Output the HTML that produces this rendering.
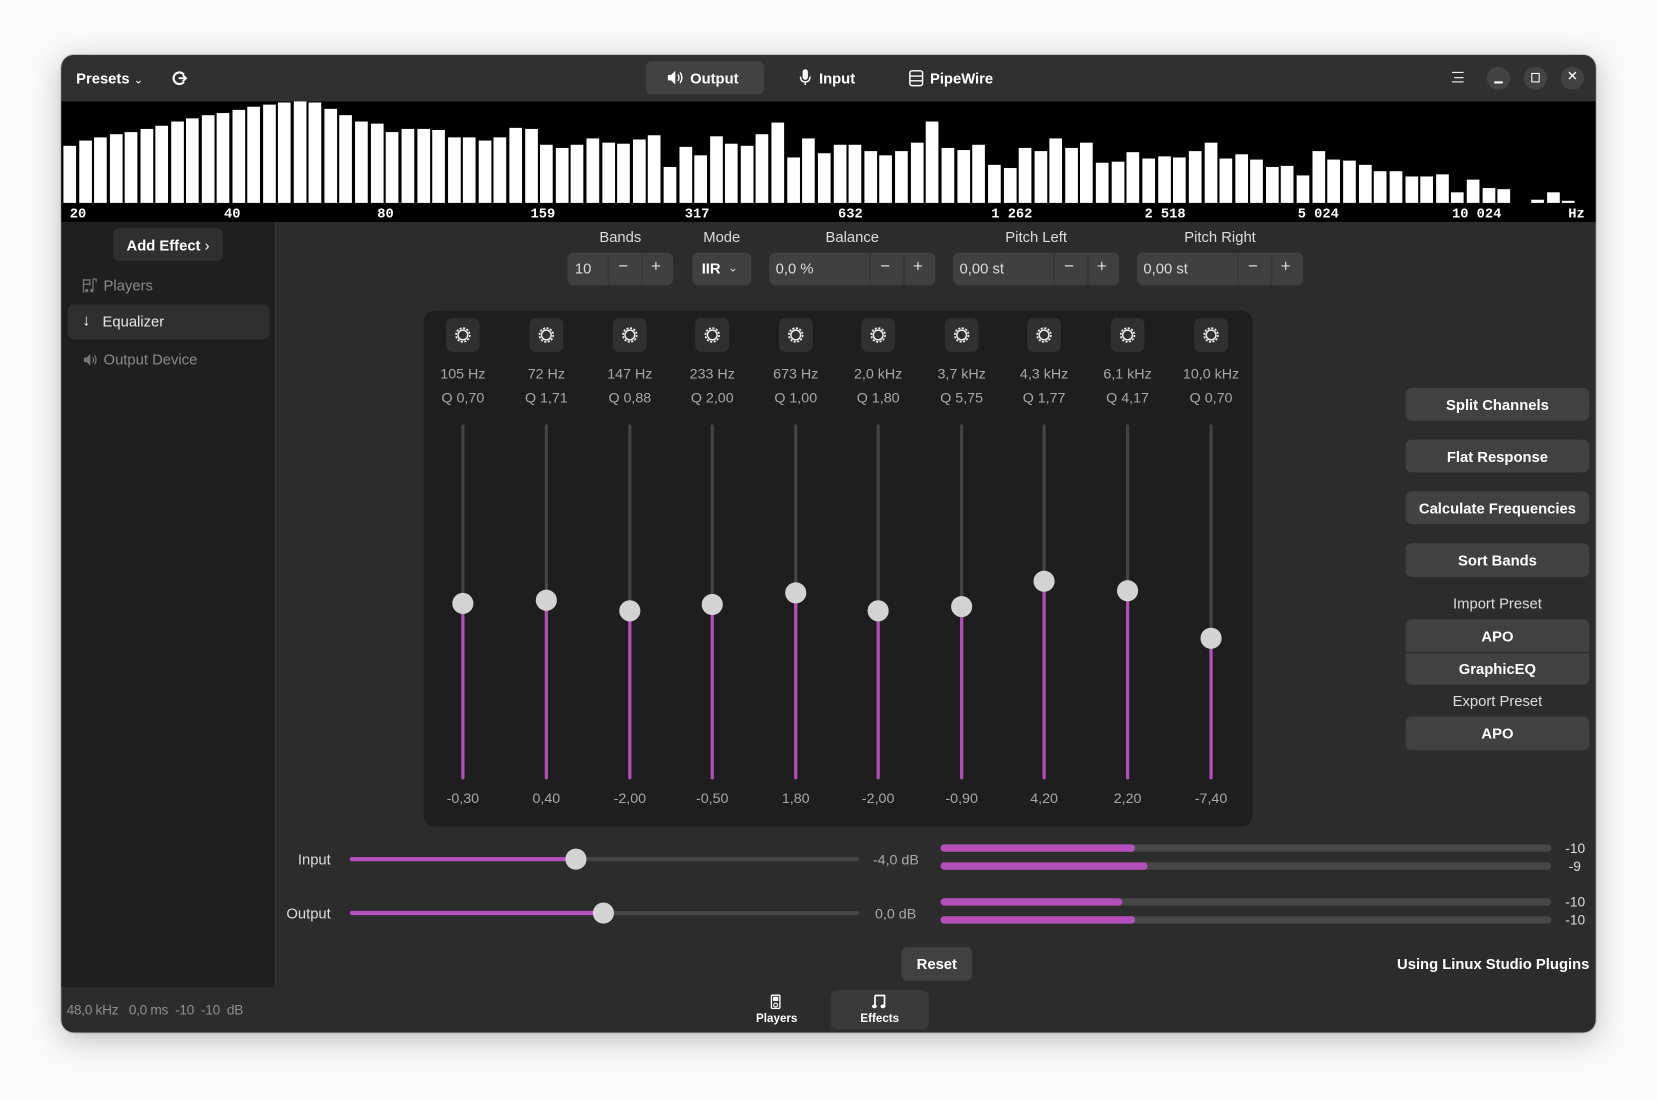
<!DOCTYPE html>
<html><head><meta charset="utf-8"><style>
*{box-sizing:border-box;margin:0;padding:0}
html,body{width:1657px;height:1100px;overflow:hidden;background:#fafafa;font-family:"Liberation Sans",sans-serif}
#s{position:absolute;left:0;top:0;width:1568px;height:1041px;transform:scale(1.05676);transform-origin:0 0}
.a{position:absolute}
.win{left:58px;top:52px;width:1452px;height:925px;background:#2c2c2c;border-radius:12px;overflow:hidden;box-shadow:0 6px 28px rgba(0,0,0,.25),0 0 0 1px rgba(0,0,0,.15)}
.t{color:#fff;font-size:14px;font-weight:bold}
.g{color:#bdbdbd;font-size:13.5px}
.btn{background:#414141;border-radius:6px;color:#fff;font-weight:bold;font-size:14px;display:flex;align-items:center;justify-content:center}
.lbl{font-size:14px;color:#ddd;text-align:center}
.spin{background:#404040;border-radius:6px;height:31px;top:239px;color:#ddd;font-size:14px}
.spin span{position:absolute;top:7px}
.sep{position:absolute;top:0;width:1px;height:31px;background:#353535}
.knob{width:20px;height:20px;border-radius:50%;background:#d3d3d3}
.mt{height:7px;background:#474747;border-radius:4px;left:890px;width:578px}
.mf{height:7px;background:#b64fbc;border-radius:4px;left:890px}
.mv{font-size:13px;color:#ddd;left:1474px;width:26px;text-align:right}
.cb{width:22px;height:22px;border-radius:50%;background:#434343;top:63px}
</style></head><body><div id="s">
<div class="a win"></div>
<div class="a" style="left:58px;top:52px;width:1452px;height:44px;background:#303030;border-radius:12px 12px 0 0"></div>
<div class="a t" style="left:72px;top:66px">Presets <span style="font-weight:normal;font-size:11px">&#8964;</span></div>
<svg class="a" style="left:162px;top:66px" width="16" height="16" viewBox="0 0 16 16"><path d="M12 4.5A5.5 5.5 0 1 0 12 11.5" fill="none" stroke="#fff" stroke-width="2"/><path d="M7 8h7M11 5l3 3-3 3" fill="none" stroke="#fff" stroke-width="1.8"/></svg>
<div class="a" style="left:611px;top:58px;width:112px;height:31px;background:#424242;border-radius:6px"></div>
<svg class="a" style="left:631px;top:66px" width="16" height="15" viewBox="0 0 16 15"><path d="M1 5h3l4-4v13l-4-4H1z" fill="#fff"/><path d="M10.5 4.5q2 3 0 6M12.5 2.5q3.5 5 0 10" fill="none" stroke="#fff" stroke-width="1.3"/></svg>
<div class="a t" style="left:653px;top:66px">Output</div>
<svg class="a" style="left:756px;top:65px" width="12" height="17" viewBox="0 0 12 17"><rect x="3.5" y="0.5" width="5" height="10" rx="2.5" fill="#fff"/><path d="M1.5 7.5q0 5 4.5 5t4.5-5M6 12.5v3" fill="none" stroke="#fff" stroke-width="1.3"/></svg>
<div class="a t" style="left:775px;top:66px">Input</div>
<svg class="a" style="left:860px;top:66px" width="14" height="16" viewBox="0 0 14 16"><rect x="1" y="1" width="12" height="14" rx="2" fill="none" stroke="#fff" stroke-width="1.4"/><path d="M1 6h12M1 10.5h12" stroke="#fff" stroke-width="1.3"/></svg>
<div class="a t" style="left:880px;top:66px">PipeWire</div>
<div class="a" style="left:1374px;top:68px;width:11px;height:10px;border-top:1.5px solid #fff;border-bottom:1.5px solid #fff"></div>
<div class="a" style="left:1376px;top:72.5px;width:9px;height:1.5px;background:#fff"></div>
<div class="a cb" style="left:1407px"></div><div class="a" style="left:1414px;top:77px;width:8px;height:1.5px;background:#fff"></div>
<div class="a cb" style="left:1442px"></div><div class="a" style="left:1449px;top:69px;width:8px;height:9px;border:1.5px solid #fff"></div>
<div class="a cb" style="left:1477px"></div><div class="a" style="left:1477px;top:64px;width:22px;text-align:center;color:#fff;font-size:13px">&#x2715;</div>
<div class="a" style="left:58px;top:96px;width:1452px;height:114px;background:#000"></div>
<svg class="a" style="left:0;top:0" width="1568" height="215">
<g fill="#fff">
<rect x="60" y="138" width="12" height="54"/><rect x="75" y="133" width="12" height="59"/><rect x="89" y="130" width="12" height="62"/><rect x="104" y="127" width="12" height="65"/><rect x="118" y="125" width="12" height="67"/><rect x="133" y="122" width="12" height="70"/><rect x="147" y="119" width="12" height="73"/><rect x="162" y="115" width="12" height="77"/><rect x="176" y="112" width="12" height="80"/><rect x="191" y="109" width="12" height="83"/><rect x="205" y="107" width="12" height="85"/><rect x="220" y="104" width="12" height="88"/><rect x="234" y="101" width="12" height="91"/><rect x="249" y="99" width="12" height="93"/><rect x="263" y="97" width="12" height="95"/><rect x="278" y="96" width="12" height="96"/><rect x="292" y="97" width="12" height="95"/><rect x="307" y="103" width="12" height="89"/><rect x="321" y="109" width="12" height="83"/><rect x="336" y="115" width="12" height="77"/><rect x="351" y="117" width="12" height="75"/><rect x="365" y="125" width="12" height="67"/><rect x="380" y="122" width="12" height="70"/><rect x="395" y="122" width="12" height="70"/><rect x="409" y="123" width="12" height="69"/><rect x="424" y="130" width="12" height="62"/><rect x="438" y="130" width="12" height="62"/><rect x="453" y="133" width="12" height="59"/><rect x="467" y="130" width="12" height="62"/><rect x="482" y="121" width="12" height="71"/><rect x="497" y="122" width="12" height="70"/><rect x="511" y="137" width="12" height="55"/><rect x="526" y="140" width="12" height="52"/><rect x="540" y="137" width="12" height="55"/><rect x="555" y="131" width="12" height="61"/><rect x="570" y="135" width="12" height="57"/><rect x="584" y="136" width="12" height="56"/><rect x="599" y="132" width="12" height="60"/><rect x="613" y="128" width="12" height="64"/><rect x="628" y="158" width="12" height="34"/><rect x="643" y="139" width="12" height="53"/><rect x="657" y="147" width="12" height="45"/><rect x="672" y="129" width="12" height="63"/><rect x="686" y="136" width="12" height="56"/><rect x="701" y="138" width="12" height="54"/><rect x="715" y="127" width="12" height="65"/><rect x="730" y="116" width="12" height="76"/><rect x="745" y="149" width="12" height="43"/><rect x="759" y="131" width="12" height="61"/><rect x="774" y="145" width="12" height="47"/><rect x="789" y="137" width="12" height="55"/><rect x="803" y="137" width="12" height="55"/><rect x="818" y="143" width="12" height="49"/><rect x="832" y="147" width="12" height="45"/><rect x="847" y="143" width="12" height="49"/><rect x="862" y="135" width="12" height="57"/><rect x="876" y="115" width="12" height="77"/><rect x="891" y="140" width="12" height="52"/><rect x="906" y="142" width="12" height="50"/><rect x="920" y="137" width="12" height="55"/><rect x="935" y="156" width="12" height="36"/><rect x="950" y="159" width="12" height="33"/><rect x="964" y="140" width="12" height="52"/><rect x="979" y="143" width="12" height="49"/><rect x="993" y="131" width="12" height="61"/><rect x="1008" y="140" width="12" height="52"/><rect x="1022" y="135" width="12" height="57"/><rect x="1037" y="154" width="12" height="38"/><rect x="1052" y="153" width="12" height="39"/><rect x="1066" y="144" width="12" height="48"/><rect x="1081" y="150" width="12" height="42"/><rect x="1096" y="148" width="12" height="44"/><rect x="1110" y="149" width="12" height="43"/><rect x="1125" y="143" width="12" height="49"/><rect x="1140" y="135" width="12" height="57"/><rect x="1154" y="150" width="12" height="42"/><rect x="1169" y="146" width="12" height="46"/><rect x="1183" y="151" width="12" height="41"/><rect x="1198" y="158" width="12" height="34"/><rect x="1212" y="157" width="12" height="35"/><rect x="1227" y="166" width="12" height="26"/><rect x="1242" y="143" width="12" height="49"/><rect x="1256" y="151" width="12" height="41"/><rect x="1271" y="152" width="12" height="40"/><rect x="1286" y="156" width="12" height="36"/><rect x="1300" y="162" width="12" height="30"/><rect x="1315" y="162" width="12" height="30"/><rect x="1330" y="167" width="12" height="25"/><rect x="1344" y="167" width="12" height="25"/><rect x="1359" y="165" width="12" height="27"/><rect x="1373" y="182" width="12" height="10"/><rect x="1388" y="170" width="12" height="22"/><rect x="1403" y="178" width="12" height="14"/><rect x="1417" y="179" width="12" height="13"/><rect x="1449" y="189" width="12" height="3"/><rect x="1464" y="182" width="12" height="10"/><rect x="1478" y="190" width="12" height="2"/>
</g>
<g fill="#fff" font-family="Liberation Mono,monospace" font-weight="bold" font-size="13">
<text x="66" y="206">20</text><text x="212" y="206">40</text><text x="357" y="206">80</text><text x="502" y="206">159</text><text x="648" y="206">317</text><text x="793" y="206">632</text><text x="938" y="206">1 262</text><text x="1083" y="206">2 518</text><text x="1228" y="206">5 024</text><text x="1374" y="206">10 024</text><text x="1484" y="206">Hz</text>
</g></svg>
<div class="a" style="left:58px;top:210px;width:203px;height:724px;background:#1f1f1f;border-right:1px solid #383838"></div>
<div class="a btn" style="left:107px;top:216px;width:104px;height:31px;background:#303030">Add Effect&nbsp;<span style="font-weight:normal">&#x203A;</span></div>
<svg class="a" style="left:78px;top:263px" width="14" height="15" viewBox="0 0 14 15"><path d="M1 1v13M1 2h6M1 6h6M7 1v6M10 1v10M10 1h3v3" fill="none" stroke="#777" stroke-width="1.2"/><circle cx="9" cy="12" r="1.6" fill="#777"/><circle cx="4" cy="12" r="1.6" fill="#777"/></svg>
<div class="a" style="left:98px;top:262px;color:#8a8a8a;font-size:14px">Players</div>
<div class="a" style="left:64px;top:288px;width:191px;height:33px;background:#2f2f2f;border-radius:6px"></div>
<div class="a" style="left:78px;top:295px;color:#fff;font-size:15px;font-weight:bold">&#x2193;</div>
<div class="a" style="left:97px;top:296px;color:#e8e8e8;font-size:14px">Equalizer</div>
<svg class="a" style="left:78px;top:334px" width="15" height="13" viewBox="0 0 16 15"><path d="M1 5h3l4-4v13l-4-4H1z" fill="#777"/><path d="M10.5 4.5q2 3 0 6M12.5 2.5q3.5 5 0 10" fill="none" stroke="#777" stroke-width="1.3"/></svg>
<div class="a" style="left:98px;top:332px;color:#8a8a8a;font-size:14px">Output Device</div>
<div class="a lbl" style="left:537px;top:216px;width:100px">Bands</div>
<div class="a lbl" style="left:655px;top:216px;width:56px">Mode</div>
<div class="a lbl" style="left:728px;top:216px;width:157px">Balance</div>
<div class="a lbl" style="left:902px;top:216px;width:157px">Pitch Left</div>
<div class="a lbl" style="left:1076px;top:216px;width:157px">Pitch Right</div>
<div class="a spin" style="left:537px;width:100px"><span style="left:7px">10</span><div class="sep" style="left:38px"></div><span style="left:48px;font-size:16px;top:5px">&minus;</span><div class="sep" style="left:70px"></div><span style="left:79px;font-size:16px;top:5px">+</span></div>
<div class="a spin" style="left:655px;width:56px"><span style="left:9px;font-weight:bold;color:#fff">IIR</span><span style="left:34px;font-size:11px;top:8px">&#8964;</span></div>
<div class="a spin" style="left:728px;width:157px"><span style="left:6px">0,0 %</span><div class="sep" style="left:95px"></div><span style="left:105px;font-size:16px;top:5px">&minus;</span><div class="sep" style="left:127px"></div><span style="left:136px;font-size:16px;top:5px">+</span></div>
<div class="a spin" style="left:902px;width:157px"><span style="left:6px">0,00 st</span><div class="sep" style="left:95px"></div><span style="left:105px;font-size:16px;top:5px">&minus;</span><div class="sep" style="left:127px"></div><span style="left:136px;font-size:16px;top:5px">+</span></div>
<div class="a spin" style="left:1076px;width:157px"><span style="left:6px">0,00 st</span><div class="sep" style="left:95px"></div><span style="left:105px;font-size:16px;top:5px">&minus;</span><div class="sep" style="left:127px"></div><span style="left:136px;font-size:16px;top:5px">+</span></div>
<div class="a" style="left:401px;top:294px;width:784px;height:488px;background:#1e1e1e;border-radius:10px"></div>
<svg class="a" style="left:0;top:0" width="1568" height="800">
<defs><g id="gr"><rect x="-16" y="-16" width="32" height="32" rx="6" fill="#303030"/><circle r="6.5" fill="none" stroke="#eee" stroke-width="1.6" stroke-dasharray="2 1.4"/><circle r="4.6" fill="none" stroke="#eee" stroke-width="1.4"/></g></defs>
<use href="#gr" x="438" y="317"/><use href="#gr" x="517" y="317"/><use href="#gr" x="596" y="317"/><use href="#gr" x="674" y="317"/><use href="#gr" x="753" y="317"/><use href="#gr" x="831" y="317"/><use href="#gr" x="910" y="317"/><use href="#gr" x="988" y="317"/><use href="#gr" x="1067" y="317"/><use href="#gr" x="1146" y="317"/>
<g stroke-linecap="round" stroke-width="3">
<g stroke="#444"><path d="M438 403V736M517 403V736M596 403V736M674 403V736M753 403V736M831 403V736M910 403V736M988 403V736M1067 403V736M1146 403V736"/></g>
<g stroke="#b64fbc"><path d="M438 571V736M517 568V736M596 578V736M674 572V736M753 561V736M831 578V736M910 574V736M988 550V736M1067 559V736M1146 604V736"/></g>
</g>
<g fill="#d3d3d3"><circle cx="438" cy="571" r="10"/><circle cx="517" cy="568" r="10"/><circle cx="596" cy="578" r="10"/><circle cx="674" cy="572" r="10"/><circle cx="753" cy="561" r="10"/><circle cx="831" cy="578" r="10"/><circle cx="910" cy="574" r="10"/><circle cx="988" cy="550" r="10"/><circle cx="1067" cy="559" r="10"/><circle cx="1146" cy="604" r="10"/></g>
<g fill="#a8a8a8" font-family="Liberation Sans,sans-serif" font-size="13.5" text-anchor="middle">
<text x="438" y="358">105 Hz</text><text x="517" y="358">72 Hz</text><text x="596" y="358">147 Hz</text><text x="674" y="358">233 Hz</text><text x="753" y="358">673 Hz</text><text x="831" y="358">2,0 kHz</text><text x="910" y="358">3,7 kHz</text><text x="988" y="358">4,3 kHz</text><text x="1067" y="358">6,1 kHz</text><text x="1146" y="358">10,0 kHz</text>
<text x="438" y="381">Q 0,70</text><text x="517" y="381">Q 1,71</text><text x="596" y="381">Q 0,88</text><text x="674" y="381">Q 2,00</text><text x="753" y="381">Q 1,00</text><text x="831" y="381">Q 1,80</text><text x="910" y="381">Q 5,75</text><text x="988" y="381">Q 1,77</text><text x="1067" y="381">Q 4,17</text><text x="1146" y="381">Q 0,70</text>
<text x="438" y="760">-0,30</text><text x="517" y="760">0,40</text><text x="596" y="760">-2,00</text><text x="674" y="760">-0,50</text><text x="753" y="760">1,80</text><text x="831" y="760">-2,00</text><text x="910" y="760">-0,90</text><text x="988" y="760">4,20</text><text x="1067" y="760">2,20</text><text x="1146" y="760">-7,40</text>
</g></svg>
<div class="a btn" style="left:1330px;top:367px;width:174px;height:31px">Split Channels</div>
<div class="a btn" style="left:1330px;top:416px;width:174px;height:31px">Flat Response</div>
<div class="a btn" style="left:1330px;top:465px;width:174px;height:31px">Calculate Frequencies</div>
<div class="a btn" style="left:1330px;top:514px;width:174px;height:32px">Sort Bands</div>
<div class="a lbl" style="left:1330px;top:563px;width:174px">Import Preset</div>
<div class="a btn" style="left:1330px;top:586px;width:174px;height:31px;border-radius:6px 6px 0 0">APO</div>
<div class="a btn" style="left:1330px;top:618px;width:174px;height:30px;border-radius:0 0 6px 6px">GraphicEQ</div>
<div class="a lbl" style="left:1330px;top:655px;width:174px">Export Preset</div>
<div class="a btn" style="left:1330px;top:678px;width:174px;height:32px">APO</div>
<div class="a" style="left:240px;top:805px;width:73px;text-align:right;color:#ddd;font-size:14px">Input</div>
<div class="a" style="left:240px;top:856px;width:73px;text-align:right;color:#ddd;font-size:14px">Output</div>
<div class="a" style="left:331px;top:811px;width:482px;height:4px;background:#454545;border-radius:2px"></div>
<div class="a" style="left:331px;top:811px;width:214px;height:4px;background:#b64fbc;border-radius:2px"></div>
<div class="a knob" style="left:535px;top:803px"></div>
<div class="a" style="left:331px;top:862px;width:482px;height:4px;background:#454545;border-radius:2px"></div>
<div class="a" style="left:331px;top:862px;width:240px;height:4px;background:#b64fbc;border-radius:2px"></div>
<div class="a knob" style="left:561px;top:854px"></div>
<div class="a g" style="left:826px;top:806px;color:#aaa">-4,0 dB</div>
<div class="a g" style="left:828px;top:857px;color:#aaa">0,0 dB</div>
<div class="a mt" style="top:799px"></div><div class="a mf" style="top:799px;width:184px"></div>
<div class="a mt" style="top:816px"></div><div class="a mf" style="top:816px;width:196px"></div>
<div class="a mt" style="top:850px"></div><div class="a mf" style="top:850px;width:172px"></div>
<div class="a mt" style="top:867px"></div><div class="a mf" style="top:867px;width:184px"></div>
<div class="a mv" style="top:795px">-10</div><div class="a mv" style="top:812px;width:22px">-9</div>
<div class="a mv" style="top:846px">-10</div><div class="a mv" style="top:863px">-10</div>
<div class="a btn" style="left:853px;top:896px;width:67px;height:32px">Reset</div>
<div class="a t" style="left:1200px;top:904px;width:304px;text-align:right">Using Linux Studio Plugins</div>
<div class="a" style="left:63px;top:948px;color:#8f8f8f;font-size:13px;letter-spacing:-0.3px">48,0 kHz&nbsp;&nbsp; 0,0 ms&nbsp; -10&nbsp; -10&nbsp; dB</div>
<div class="a" style="left:786px;top:937px;width:93px;height:37px;background:#3a3a3a;border-radius:6px"></div>
<svg class="a" style="left:729px;top:941px" width="10" height="14" viewBox="0 0 10 14"><rect x="1" y="0.7" width="8" height="12.6" rx="1" fill="none" stroke="#fff" stroke-width="1.3"/><rect x="2.5" y="2.2" width="5" height="4" fill="#fff"/><circle cx="5" cy="10" r="1.8" fill="none" stroke="#fff" stroke-width="1.1"/></svg>
<div class="a" style="left:705px;top:958px;width:60px;text-align:center;color:#fff;font-size:11px;font-weight:bold">Players</div>
<svg class="a" style="left:825px;top:940px" width="13" height="15" viewBox="0 0 13 15"><path d="M3 2h9v10M3 2v10" fill="none" stroke="#fff" stroke-width="1.6"/><ellipse cx="2.5" cy="12.3" rx="2.3" ry="1.8" fill="#fff"/><ellipse cx="10.5" cy="12.3" rx="2.3" ry="1.8" fill="#fff"/></svg>
<div class="a" style="left:786px;top:958px;width:93px;text-align:center;color:#fff;font-size:11px;font-weight:bold">Effects</div>
</div></body></html>
